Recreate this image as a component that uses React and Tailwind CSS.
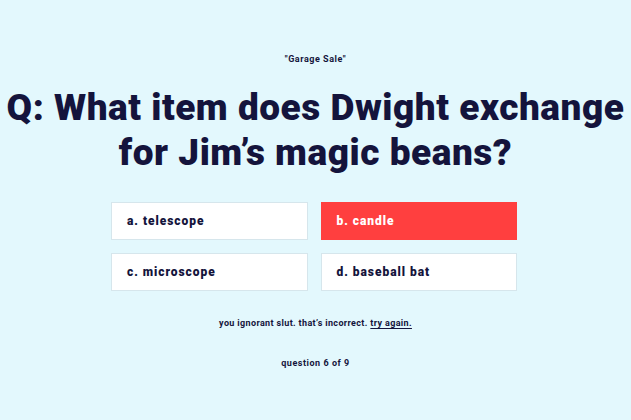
const answers = [
  { label: 'a. telescope', wrong: false },
  { label: 'b. candle', wrong: true },
  { label: 'c. microscope', wrong: false },
  { label: 'd. baseball bat', wrong: false },
];

export default function App() {
  return (
    <div
      className="min-h-screen w-full bg-[#e3f8fd] text-[#14143c] flex flex-col items-center pt-[53px]"
      style={{ fontFamily: 'Roboto, "Liberation Sans", sans-serif' }}
    >
      <p className="text-[9px] font-bold tracking-[0.06em] leading-[12px]">"Garage Sale"</p>
      <h1 className="mt-[20px] text-[37px] font-black leading-[45px] text-center tracking-[0.014em] whitespace-nowrap">
        Q: What item does Dwight exchange
        <br />
        for Jim’s magic beans?
      </h1>
      <div className="mt-[27px] mr-[3px] grid grid-cols-2 gap-[13px] w-[406px]">
        {answers.map((a) => (
          <button
            key={a.label}
            className={
              a.wrong
                ? 'h-[38px] text-left pl-[15px] bg-[#ff3f3f] border border-[#ff3f3f] text-white text-[12px] font-black tracking-[0.08em]'
                : 'h-[38px] text-left pl-[15px] bg-white border border-[#d6e6ec] text-[12px] font-black tracking-[0.08em]'
            }
          >
            {a.label}
          </button>
        ))}
      </div>
      <p className="mt-[26px] text-[9px] font-bold tracking-[0.04em] leading-[12px]">
        you ignorant slut. that’s incorrect. <span className="underline underline-offset-2">try again.</span>
      </p>
      <p className="mt-[28px] text-[9px] font-bold tracking-[0.06em] leading-[12px]">question 6 of 9</p>
    </div>
  );
}
